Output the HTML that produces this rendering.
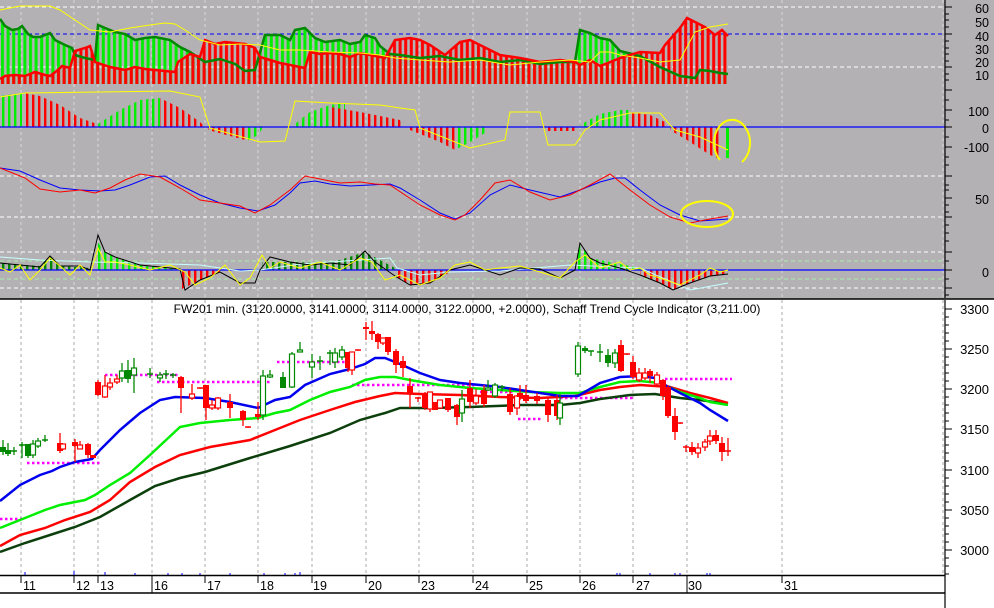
<!DOCTYPE html>
<html><head><meta charset="utf-8"><style>
html,body{margin:0;padding:0;background:#fff;width:994px;height:608px;overflow:hidden}
svg{display:block}
text{font-family:"Liberation Sans",sans-serif}
</style></head><body>
<svg id="s" width="994" height="608" viewBox="0 0 994 608" xmlns="http://www.w3.org/2000/svg">
<defs>
<pattern id="pr" patternUnits="userSpaceOnUse" width="5.6" height="10"><rect x="1" y="0" width="3" height="10" fill="#ff0000"/></pattern>
<pattern id="pg" patternUnits="userSpaceOnUse" width="5.6" height="10"><rect x="1" y="0" width="3" height="10" fill="#00ee00"/></pattern>
<pattern id="pr2" patternUnits="userSpaceOnUse" width="6" height="10"><rect x="2" y="0" width="2.4" height="10" fill="#ff0000"/></pattern>
<pattern id="pg2" patternUnits="userSpaceOnUse" width="6" height="10"><rect x="2" y="0" width="2.4" height="10" fill="#00ee00"/></pattern>
<pattern id="pdg" patternUnits="userSpaceOnUse" width="6" height="10"><rect x="2" y="0" width="2.4" height="10" fill="#008800"/></pattern>
</defs>
<rect x="0" y="0" width="994" height="299" fill="#b3b1b3"/>
<line x1="0" y1="299" x2="994" y2="299" stroke="#000" stroke-width="1.5"/>
<!-- vertical grid -->
<g stroke="#d8d6d8" stroke-dasharray="3,3" stroke-width="1">
<path d="M21 0V298M74 0V298M98 0V298M152 0V298M205 0V298M258 0V298M312 0V298M366 0V298M419 0V298M473 0V298M527 0V298M580 0V298M633 0V298M687 0V298M782 0V298M943 0V298"/>
</g>
<g stroke="#aaa" stroke-dasharray="3,3" stroke-width="1">
<path d="M21 300V575M74 300V575M98 300V575M152 300V575M205 300V575M258 300V575M312 300V575M366 300V575M419 300V575M473 300V575M527 300V575M580 300V575M633 300V575M687 300V575M782 300V575M943 300V575"/>
</g>
<!-- panel 1 -->
<g stroke="#fff" stroke-dasharray="4,3" fill="none"><path d="M0 7H945M0 67H945M0 176H945M0 217H945M0 252H945M0 288H945"/></g>
<path d="M0 34H945" stroke="#0000ff" stroke-dasharray="4,3"/>
<path d="M0 261H945M0 279H945" stroke="#a8f0a8" stroke-dasharray="4,3"/>
<polygon fill="url(#pg)" points="0,84 0,19 5,26 12,30 18,29 22,26 28,34 33,37 40,37 50,33 55,40 65,45 72,48 75,55 85,58 95,60 98,25 105,28 115,32 125,34 135,40 145,38 155,37 170,40 180,47 190,52 205,62 220,59 235,64 245,71 255,70 265,35 280,35 290,40 295,30 305,28 315,38 325,42 340,40 350,44 360,42 365,35 375,38 380,46 390,54 400,55 420,58 440,56 460,60 480,58 500,62 520,60 540,64 560,62 575,62 580,30 590,33 600,38 610,40 620,51 640,56 660,67 680,76 695,78 700,70 710,71 720,73 728,74 728,84"/>
<polygon fill="url(#pr)" points="0,84 0,79 5,76 15,75 25,76 35,72 45,75 50,76 58,70 62,66 70,68 75,51 85,48 90,46 95,62 110,67 125,70 135,67 145,69 165,71 175,72 178,62 190,54 200,57 205,40 215,44 225,42 235,43 245,44 255,48 260,57 270,60 280,63 290,65 305,68 310,52 320,54 330,53 340,54 350,57 360,53 370,55 385,58 395,40 410,38 420,40 430,45 445,55 460,42 470,40 490,50 500,55 520,58 540,62 560,60 575,62 580,65 590,60 600,66 608,63 620,58 640,52 660,53 665,45 680,28 687,18 695,22 705,27 715,35 722,30 728,36 728,84"/>
<polyline fill="none" stroke="#008800" stroke-width="2.5" points="0,19 5,26 12,30 18,29 22,26 28,34 33,37 40,37 50,33 55,40 65,45 72,48 75,55 85,58 95,60 98,25 105,28 115,32 125,34 135,40 145,38 155,37 170,40 180,47 190,52 205,62 220,59 235,64 245,71 255,70 265,35 280,35 290,40 295,30 305,28 315,38 325,42 340,40 350,44 360,42 365,35 375,38 380,46 390,54 400,55 420,58 440,56 460,60 480,58 500,62 520,60 540,64 560,62 575,62 580,30 590,33 600,38 610,40 620,51 640,56 660,67 680,76 695,78 700,70 710,71 720,73 728,74"/>
<polyline fill="none" stroke="#ff0000" stroke-width="2.5" points="0,79 5,76 15,75 25,76 35,72 45,75 50,76 58,70 62,66 70,68 75,51 85,48 90,46 95,62 110,67 125,70 135,67 145,69 165,71 175,72 178,62 190,54 200,57 205,40 215,44 225,42 235,43 245,44 255,48 260,57 270,60 280,63 290,65 305,68 310,52 320,54 330,53 340,54 350,57 360,53 370,55 385,58 395,40 410,38 420,40 430,45 445,55 460,42 470,40 490,50 500,55 520,58 540,62 560,60 575,62 580,65 590,60 600,66 608,63 620,58 640,52 660,53 665,45 680,28 687,18 695,22 705,27 715,35 722,30 728,36"/>
<polyline fill="none" stroke="#ffff00" stroke-width="1" points="0,10 20,6 50,6 60,10 75,20 90,30 110,32 130,28 150,25 165,23 175,24 185,30 200,40 220,45 240,44 260,45 280,50 300,50 330,52 360,53 380,55 395,58 420,60 450,62 480,60 510,65 540,62 570,60 590,62 600,52 610,52 620,55 640,58 660,62 680,60 695,32 710,27 728,24"/>
<!-- panel 2 -->
<polygon fill="url(#pg2)" points="0,127 0,96 22,93 22,127"/>
<polygon fill="url(#pr2)" points="24,127 24,93 40,96 60,105 80,118 100,125 100,127"/>
<polygon fill="url(#pg2)" points="98,127 98,124 120,110 140,100 160,98 160,127"/>
<polygon fill="url(#pr2)" points="160,127 160,98 180,108 200,122 205,127"/>
<polygon fill="url(#pr2)" points="208,127 208,130 230,136 245,140 245,127"/>
<polygon fill="url(#pg2)" points="245,127 245,142 258,135 262,129 262,127"/>
<polygon fill="url(#pg2)" points="295,127 295,124 310,112 330,105 345,103 345,127"/>
<polygon fill="url(#pr2)" points="330,127 330,107 360,112 400,120 402,127"/>
<polygon fill="url(#pr2)" points="410,127 410,130 440,142 455,150 455,127"/>
<polygon fill="url(#pg2)" points="455,127 455,150 470,142 485,133 485,127"/>
<polygon fill="url(#pr2)" points="545,127 545,131 578,131 578,127"/>
<polygon fill="url(#pg2)" points="580,127 580,125 600,114 620,110 630,110 630,127"/>
<polygon fill="url(#pr2)" points="630,127 630,112 650,115 665,122 668,127"/>
<polygon fill="url(#pr2)" points="670,127 670,130 690,142 710,155 722,160 722,127"/>
<rect x="726" y="127" width="3" height="31" fill="#00ee00"/>
<path d="M0 127H945" stroke="#0000ff" stroke-width="1.2"/>
<polyline fill="none" stroke="#ffff00" stroke-width="1" points="0,97 25,93 100,92 170,91 200,97 210,128 260,142 285,141 295,101 330,103 380,105 400,108 415,110 420,128 470,148 505,140 510,112 540,112 548,145 575,145 585,130 600,120 630,113 660,113 670,125 675,130 700,137 728,150"/>
<path d="M720 160 A18 23 0 1 1 742 162" fill="none" stroke="#ffff00" stroke-width="2"/>
<!-- panel 3 -->
<polyline fill="none" stroke="#0000ff" stroke-width="1" points="0,168 20,171 40,180 60,188 80,190 100,191 115,190 130,185 150,177 165,176 180,185 200,195 220,203 240,208 258,211 275,205 290,193 300,183 315,181 330,184 350,186 370,185 390,184 400,188 420,200 440,213 455,219 470,213 490,195 510,185 530,190 560,197 580,190 600,182 615,178 625,178 640,190 660,205 680,215 700,221 728,219"/>
<polyline fill="none" stroke="#ff0000" stroke-width="1" points="0,168 25,178 40,189 60,192 80,190 95,193 110,188 125,180 140,174 160,177 180,188 200,200 220,203 240,206 255,213 270,205 290,190 305,176 320,179 340,183 360,182 375,184 390,185 405,195 420,205 440,215 455,220 465,215 480,200 495,183 510,180 530,192 550,200 570,195 590,185 610,174 630,190 650,205 670,217 690,223 710,219 728,216"/>
<ellipse cx="707" cy="214" rx="26" ry="13" fill="none" stroke="#ffff00" stroke-width="2"/>
<!-- panel 4 -->
<polygon fill="url(#pdg)" points="0,270 0,263 40,266 50,256 60,266 90,268 90,270"/>
<polygon fill="url(#pg2)" points="96,270 96,240 105,252 115,257 140,265 175,268 175,270"/>
<polygon fill="url(#pdg)" points="262,270 262,262 290,262 330,263 365,252 395,268 395,270"/>
<polygon fill="url(#pr2)" points="395,270 395,276 410,285 430,283 450,272 450,270"/>
<polygon fill="url(#pr2)" points="180,270 180,290 200,280 220,272 220,270"/>
<polygon fill="url(#pg2)" points="575,270 575,260 580,245 590,258 640,268 640,270"/>
<polygon fill="url(#pr2)" points="640,270 640,275 660,283 673,290 690,283 710,276 728,274 728,270"/>
<path d="M0 270H945" stroke="#0000ff" stroke-width="1.2"/>
<polyline fill="none" stroke="#c8ffff" stroke-width="1" points="0,257 40,260 90,262 140,263 200,265 240,271 260,270 300,264 390,258 397,268 420,275 450,272 500,271 570,265 640,268 690,290 728,283"/>
<polyline fill="none" stroke="#000" stroke-width="1" points="0,263 20,265 40,267 50,256 60,266 80,266 90,270 98,235 105,252 115,257 140,265 170,268 180,269 185,290 200,280 220,272 240,283 255,283 260,270 270,257 290,262 310,265 330,263 350,265 365,251 375,262 395,276 410,285 430,283 450,270 470,265 500,275 520,268 540,269 560,278 575,270 580,243 590,258 600,263 620,268 640,275 660,283 673,290 690,283 710,276 728,274"/>
<polyline fill="none" stroke="#ffff00" stroke-width="1" points="0,268 10,272 20,265 30,280 40,270 50,258 60,266 70,275 80,265 90,275 98,248 105,262 115,262 130,265 150,270 170,265 185,272 195,285 210,278 225,265 240,285 250,278 262,255 270,268 280,262 300,268 320,262 340,270 360,258 372,262 385,280 400,275 420,285 440,278 455,265 470,262 485,270 500,268 520,266 540,272 560,278 575,262 585,255 600,268 620,262 630,270 640,268 650,275 660,278 680,285 700,275 710,268 720,272 728,270"/>
<!-- right axis (top) -->
<path d="M945 0V298" stroke="#000" stroke-width="1.2"/>
<g stroke="#000"><path d="M945 7H952M945 14H949M945 20H949M945 27H949M945 34H952M945 41H949M945 48H949M945 54H949M945 61H949M945 67H952M945 74H949M945 80H949M945 90H952M945 100H949M945 110H952M945 120H949M945 127H952M945 137H949M945 147H952M945 157H949M945 165H949M945 176H952M945 185H949M945 190H949M945 198H952M945 205H949M945 212H949M945 217H952M945 225H949M945 233H949M945 241H949M945 252H952M945 261H949M945 270H952M945 279H949M945 288H952M945 295H949"/></g>
<g font-size="12.5" fill="#000" text-anchor="end">
<text x="989" y="13">60</text><text x="989" y="27">50</text><text x="989" y="41">40</text><text x="989" y="54">30</text><text x="989" y="67">20</text><text x="989" y="80">10</text>
<text x="989" y="116">100</text><text x="989" y="133">0</text><text x="989" y="152">-100</text>
<text x="989" y="204">50</text><text x="989" y="277">0</text>
</g>
<!-- main panel -->
<text x="467" y="313" font-size="12" text-anchor="middle" fill="#000">FW201 min. (3120.0000, 3141.0000, 3114.0000, 3122.0000, +2.0000), Schaff Trend Cycle Indicator (3,211.00)</text>
<g stroke="#ff00ff" stroke-width="2.5" stroke-dasharray="2.5,2.5" fill="none">
<path d="M0 519H22M27 463H100M105 375H180M157 382H272M277 362H350M352 385H475M480 392H515M518 419H542M560 398H634M665 379H732"/>
</g>
<polyline fill="none" stroke="#0b3f0b" stroke-width="2.5" points="0,552 25,543 50,535 75,527 100,517 130,500 155,486 180,478 205,472 250,458 290,446 330,433 360,420 385,413 400,408 430,408 470,407 520,405 560,405 580,403 600,399 630,395 655,394 680,398 700,400 728,404"/>
<polyline fill="none" stroke="#ff0000" stroke-width="2.5" points="0,546 20,535 45,528 65,520 90,512 110,500 130,482 155,467 180,455 210,447 250,440 270,432 300,420 330,410 355,402 380,396 395,393 420,394 460,395 500,397 540,398 575,396 600,390 620,387 640,385 670,387 690,393 710,398 728,403"/>
<polyline fill="none" stroke="#00ee00" stroke-width="2.5" points="0,528 20,520 45,510 60,505 85,500 95,495 110,485 130,473 150,455 180,427 200,423 230,420 258,418 275,413 290,410 310,400 330,392 350,387 365,380 380,377 395,377 410,380 440,385 470,388 500,390 530,392 560,393 580,393 600,387 620,382 640,381 660,383 680,392 700,398 710,402 728,405"/>
<polyline fill="none" stroke="#0000ee" stroke-width="2.5" points="0,501 20,485 40,475 52,471 60,467 75,462 92,459 100,450 120,430 140,413 160,400 175,397 205,398 230,402 258,408 275,400 290,397 305,385 330,374 350,369 365,364 375,358 385,358 400,364 420,373 440,380 460,383 480,385 500,387 520,390 540,393 560,396 578,396 590,389 600,383 620,377 640,376 655,378 665,385 680,393 700,403 710,410 728,421"/>
<g id="candles"></g>
<!-- right axis main -->
<path d="M945 300V608" stroke="#000" stroke-width="1.2"/>
<g stroke="#000"><path d="M945 309H952M945 317H949M945 325H949M945 333H949M945 341H949M945 349H952M945 357H949M945 365H949M945 373H949M945 381H949M945 389H952M945 397H949M945 405H949M945 413H949M945 421H949M945 429H952M945 437H949M945 445H949M945 453H949M945 461H949M945 470H952M945 478H949M945 486H949M945 494H949M945 502H949M945 510H952M945 518H949M945 526H949M945 534H949M945 542H949M945 550H952M945 558H949M945 566H949M945 574H949"/></g>
<g font-size="13" fill="#000" text-anchor="end">
<text x="989" y="314">3300</text><text x="989" y="354">3250</text><text x="989" y="394">3200</text><text x="989" y="434">3150</text><text x="989" y="475">3100</text><text x="989" y="515">3050</text><text x="989" y="555">3000</text>
</g>
<!-- bottom axis -->
<path d="M0 575.5H945M0 593H945" stroke="#000" stroke-width="1.5"/>
<g stroke="#000"><path d="M21 575V583M74 575V583M98 575V583M152 575V593M205 575V583M258 575V583M312 575V583M366 575V583M419 575V583M473 575V583M527 575V583M580 575V583M633 575V583M687 575V593M782 575V583"/></g>
<g stroke="#0000ff"><path d="M25 572V575M74 571V575M105 572V575M135 573V575M168 573V575M182 573V575M200 573V575M230 573V575M264 573V575M285 573V575M295 573V575M300 572V575M617 573V575M620 573V575M650 573V575M675 573V575M680 573V575M707 573V575M710 573V575"/></g>
<g font-size="12.5" fill="#000">
<text x="23" y="590">11</text><text x="76" y="590">12</text><text x="100" y="590">13</text><text x="154" y="590">16</text><text x="207" y="590">17</text><text x="260" y="590">18</text><text x="313" y="590">19</text><text x="368" y="590">20</text><text x="421" y="590">23</text><text x="475" y="590">24</text><text x="529" y="590">25</text><text x="582" y="590">26</text><text x="636" y="590">27</text><text x="688" y="590">30</text><text x="784" y="590">31</text>
</g>
</svg>
<script>
var C=[[3,447,452,440,455,'gf'],[8,450,454,443,456,'gf'],[14,451,452,447,455,'g'],[22,445,448,442,458,'g'],[28,444,456,444,458,'gf'],[33,444,455,440,458,'gh'],[38,441,446,438,448,'gh'],[45,440,442,435,442,'g'],[60,443,451,433,453,'rf'],[63,444,449,444,450,'rh'],[75,442,446,439,462,'rf'],[80,445,449,441,449,'rh'],[88,444,455,443,458,'rf'],[93,455,458,455,458,'rf'],
[98,382,395,380,396,'rf'],[105,386,397,375,398,'rh'],[110,383,387,378,390,'rh'],[117,379,382,375,384,'rh'],[122,371,378,363,382,'gh'],[128,370,379,360,383,'gf'],[134,368,375,358,393,'gh'],[150,374,376,368,378,'g'],[160,375,378,372,382,'gh'],[166,374,376,370,379,'g'],[173,375,376,373,378,'g'],[181,377,388,376,413,'rf'],[192,394,398,384,400,'rh'],[200,388,389,388,389,'r'],[206,385,408,385,420,'rf'],[212,405,408,400,410,'rh'],[218,398,408,397,410,'rh'],[230,402,408,394,418,'rf'],[243,411,420,410,426,'rf'],[248,427,428,427,428,'r'],[258,414,417,402,420,'rf'],[263,376,415,370,420,'gh'],[270,375,377,370,378,'gh'],[283,377,388,372,388,'gf'],[292,354,387,352,388,'gh'],[300,350,351,342,352,'gh'],[312,362,367,354,378,'gh'],[320,361,365,356,370,'g'],[330,353,362,350,365,'g'],[335,353,362,348,368,'gh'],[342,350,357,346,360,'gh'],[348,352,368,352,372,'rf'],[352,352,370,352,375,'rh'],[358,350,351,350,351,'r'],[366,327,329,322,340,'rf'],[372,331,334,321,340,'rf'],[378,334,342,333,349,'rf'],[383,338,343,338,345,'rh'],[388,337,352,337,355,'rf'],[396,351,365,349,373,'rf'],[403,361,368,356,377,'rf'],[410,386,393,378,408,'rf'],[418,398,400,397,402,'r'],[425,395,408,392,410,'rf'],[430,392,409,393,412,'rh'],[435,402,410,402,410,'rf'],[440,400,408,400,408,'rh'],[448,398,410,398,412,'rf'],[457,405,417,404,425,'rf'],[462,399,413,390,422,'gh'],[470,388,402,380,408,'rf'],[476,396,403,389,405,'rh'],[484,390,404,385,407,'rf'],[488,388,390,380,391,'gh'],[495,385,396,383,398,'gh'],[502,387,388,385,391,'g'],[510,394,412,388,415,'rf'],[517,396,408,395,415,'rh'],[520,393,397,385,400,'rf'],[526,395,401,385,403,'rf'],[537,396,401,393,404,'rf'],[548,400,415,398,422,'rf'],[557,400,416,395,420,'rf'],[560,403,418,394,425,'gh'],[578,346,374,342,377,'gh'],[585,348,351,346,353,'gf'],[591,351,356,351,356,'g'],[600,352,355,344,362,'g'],[608,355,363,349,367,'gf'],[615,353,363,349,368,'gh'],[621,345,371,340,372,'rf'],[627,354,355,354,355,'r'],[633,362,377,356,379,'rf'],[639,373,380,368,382,'rh'],[645,373,378,368,380,'rh'],[650,371,376,369,383,'rf'],[657,375,384,372,387,'rh'],[663,380,396,379,400,'rf'],[668,387,416,385,418,'rf'],[675,416,432,408,440,'rf'],[680,423,424,423,424,'r'],[686,447,448,445,452,'r'],[692,447,452,442,455,'rf'],[698,448,453,443,458,'rh'],[705,442,447,439,451,'rh'],[710,436,441,430,445,'rh'],[716,435,441,430,444,'rf'],[722,443,452,437,461,'rf'],[728,451,452,438,456,'r']];
var h='';C.forEach(function(c){var col=c[5][0]=='r'?'#ff0000':'#008800';var x=c[0];
h+='<line x1="'+x+'" y1="'+c[3]+'" x2="'+x+'" y2="'+c[4]+'" stroke="'+col+'" stroke-width="1.3"/>';
if(c[5].length==1){h+='<line x1="'+(x-3)+'" y1="'+c[1]+'" x2="'+(x+3)+'" y2="'+c[1]+'" stroke="'+col+'" stroke-width="1.5"/>';}
else if(c[5][1]=='f'){h+='<rect x="'+(x-3)+'" y="'+c[1]+'" width="6" height="'+Math.max(2,c[2]-c[1])+'" fill="'+col+'"/>';}
else{h+='<rect x="'+(x-2.5)+'" y="'+c[1]+'" width="5" height="'+Math.max(2,c[2]-c[1])+'" fill="#fff" stroke="'+col+'" stroke-width="1.2"/>';}});
document.getElementById('candles').innerHTML=h;
</script>
</body></html>
